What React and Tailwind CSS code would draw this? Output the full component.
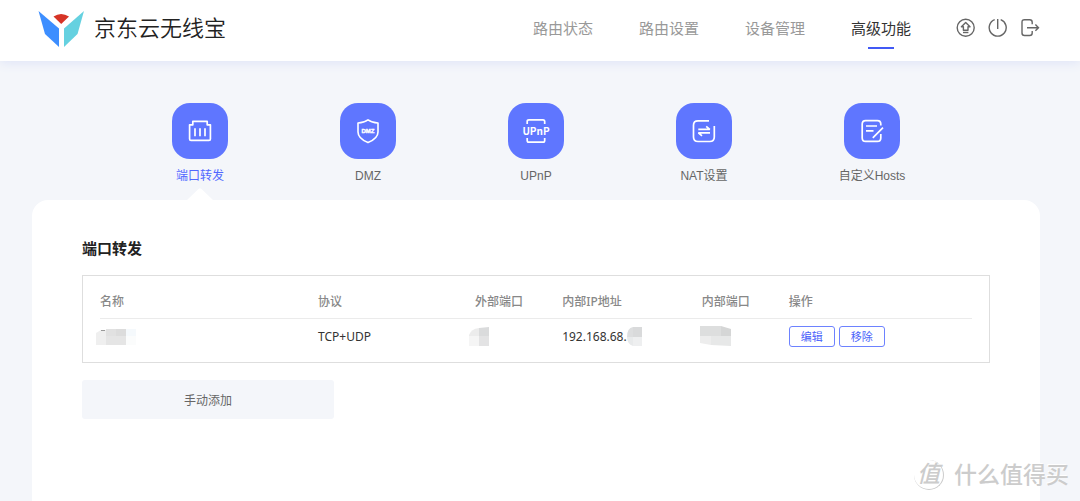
const navItems = ['路由状态', '路由设置', '设备管理', '高级功能'];

const columns = [
  { label: '名称', width: 'w-[25%]' },
  { label: '协议', width: 'w-[18%]' },
  { label: '外部端口', width: 'w-[10%]' },
  { label: '内部IP地址', width: 'w-[16%]' },
  { label: '内部端口', width: 'w-[10%]' },
  { label: '操作', width: 'w-[21%]' },
];

function Logo() {
  return (
    <svg width="46" height="38" viewBox="0 0 46 38" aria-hidden="true">
      <path d="M0.5 1 L21 18.5 V37 L7 24 Z" fill="#3d8eff" />
      <path d="M46 1 L26 18.5 V37 L39.5 24 Z" fill="#65d1e0" />
      <path d="M15.5 6.5 Q23 1.5 31 6.5 L23.2 14 Z" fill="#d63426" />
    </svg>
  );
}

function UpgradeIcon() {
  return (
    <svg width="20" height="20" viewBox="0 0 20 20" fill="none" stroke="#666" strokeWidth="1.4">
      <circle cx="9.7" cy="9.7" r="8.5" />
      <path d="M9.7 4.5 L14 8.8 H12 V12.2 H7.4 V8.8 H5.4 Z" strokeLinejoin="round" />
      <path d="M7 14.5 H12.4" />
    </svg>
  );
}

function PowerIcon() {
  return (
    <svg width="20" height="20" viewBox="0 0 20 20" fill="none" stroke="#666" strokeWidth="1.4">
      <path d="M6.7 1.7 A8.5 8.5 0 1 0 12.7 1.7" />
      <path d="M9.7 1 V11" />
    </svg>
  );
}

function LogoutIcon() {
  return (
    <svg width="20" height="20" viewBox="0 0 20 20" fill="none" stroke="#666" strokeWidth="1.4">
      <path d="M12.2 6.2 V4.2 Q12.2 1.7 9.7 1.7 H4.5 Q2 1.7 2 4.2 V15 Q2 17.5 4.5 17.5 H9.7 Q12.2 17.5 12.2 15 V13" />
      <path d="M7 9.7 H18.2 M15.4 6.6 L18.5 9.7 L15.4 12.8" />
    </svg>
  );
}

function PortIcon() {
  return (
    <svg width="28" height="28" viewBox="0 0 28 28" fill="none" stroke="#fff" strokeWidth="1.7" strokeLinejoin="round">
      <path d="M3.6 7.8 H6.8 V4.4 H21.2 V7.8 H24.4 V22 Q24.4 23.4 23 23.4 H5 Q3.6 23.4 3.6 22 Z" />
      <path d="M9 11.2 V19.2 M14 11.2 V19.2 M19 11.2 V19.2" />
    </svg>
  );
}

function DmzIcon() {
  return (
    <svg width="28" height="28" viewBox="0 0 28 28" fill="none" stroke="#fff" strokeWidth="1.6" strokeLinejoin="round">
      <path d="M14 2.8 C17 5 20.5 5.8 24 6 V15 C24 20 19.5 23.3 14 25.6 C8.5 23.3 4 20 4 15 V6 C7.5 5.8 11 5 14 2.8 Z" />
      <text x="14" y="16" textAnchor="middle" fontSize="6" fontWeight="700" fill="#fff" strokeWidth="0.4" fontFamily="Liberation Sans, sans-serif">DMZ</text>
    </svg>
  );
}

function UpnpIcon() {
  return (
    <svg width="28" height="28" viewBox="0 0 28 28" fill="none" stroke="#fff" strokeWidth="1.7">
      <path d="M5.2 7 V4.5 Q5.2 2.8 6.9 2.8 H21 Q22.7 2.8 22.7 4.5 V7" />
      <path d="M5.2 21 V23.5 Q5.2 25.2 6.9 25.2 H21 Q22.7 25.2 22.7 23.5 V21" />
      <text x="14" y="18" textAnchor="middle" fontSize="10" fontWeight="700" fill="#fff" stroke="none" fontFamily="Noto Sans CJK SC, sans-serif">UPnP</text>
    </svg>
  );
}

function NatIcon() {
  return (
    <svg width="28" height="28" viewBox="0 0 28 28" fill="none" stroke="#fff" strokeWidth="1.7">
      <path d="M19 3.8 H8 Q3.5 3.8 3.5 8.3 V20 Q3.5 24.5 8 24.5 H19.8 Q24.3 24.5 24.3 20 V9" />
      <path d="M8.3 12.4 H19.8 L16.2 9.4 M20 15.8 H8.4 L12 18.8" strokeLinejoin="bevel" />
    </svg>
  );
}

function HostsIcon() {
  return (
    <svg width="28" height="28" viewBox="0 0 28 28" fill="none" stroke="#fff" strokeWidth="1.7">
      <path d="M22.8 8.5 V7 Q22.8 3.6 19.4 3.6 H7.6 Q4.2 3.6 4.2 7 V21 Q4.2 24.4 7.6 24.4 H19.4 Q22.8 24.4 22.8 21 V17" />
      <path d="M8 9 H19 M8 13.9 H15.5 M14.8 20.8 L25 10.6" />
    </svg>
  );
}

const features = [
  { label: '端口转发', Icon: PortIcon, active: true },
  { label: 'DMZ', Icon: DmzIcon },
  { label: 'UPnP', Icon: UpnpIcon },
  { label: 'NAT设置', Icon: NatIcon },
  { label: '自定义Hosts', Icon: HostsIcon },
];

// mosaic blocks that hide the private values
function NameMask() {
  return (
    <svg className="-ml-1 block" width="40" height="17" viewBox="0 0 40 17">
      <path d="M0 4 L5 1 H10 V16 H0 Z" fill="#efefef" />
      <path d="M5 1.5 H9" stroke="#999" />
      <path d="M10 0 H20 V7 H10 Z" fill="#e1e1e1" />
      <path d="M20 0 H30 V7 H20 Z" fill="#dcdcdc" />
      <path d="M10 7 H30 V16 H10 Z" fill="#e5e5e5" />
      <path d="M30 0 H40 V7 H30 Z" fill="#f5f9fc" />
      <path d="M30 7 H40 V16 H30 Z" fill="#fbfcfc" />
    </svg>
  );
}

function OuterPortMask() {
  return (
    <svg className="-ml-1.5 block" width="20" height="19" viewBox="0 0 20 19">
      <path d="M0 8 Q2 2 10 1 V9 H0 Z" fill="#ececec" />
      <path d="M10 1 L20 0 V9 H10 Z" fill="#dadbdc" />
      <path d="M0 9 H10 V19 H0 Z" fill="#f5f5f5" />
      <path d="M10 9 H20 V19 H10 Z" fill="#e3e3e4" />
    </svg>
  );
}

function IpMask() {
  return (
    <svg className="block" width="15" height="20" viewBox="0 0 15 20">
      <path d="M0 10 Q0 1 6 0 V10 Z" fill="#dddedf" />
      <path d="M6 0 H15 V10 H6 Z" fill="#d9dadb" />
      <path d="M0 10 H6 V19 Q0 17 0 10 Z" fill="#e8eaeb" />
      <path d="M6 10 H15 V19 H6 Z" fill="#eeeff0" />
    </svg>
  );
}

function InnerPortMask() {
  return (
    <svg className="-ml-0.5 block" width="32" height="21" viewBox="0 0 32 21">
      <path d="M0 0 H21 V10 H0 Z" fill="#dddede" />
      <path d="M21 0 L31 3 V10 H21 Z" fill="#d5d6d6" />
      <path d="M0 10 H11 V19 L0 17 Z" fill="#ededed" />
      <path d="M11 10 H31 V20 L11 19 Z" fill="#e7e8e8" />
    </svg>
  );
}

function Header() {
  return (
    <header className="relative flex h-[61px] items-center justify-between bg-white pr-10 pb-1 pl-[38px] shadow-[0_2px_10px_#dfe4f7]">
      <a href="#home" className="flex items-center gap-[10px] text-[22px] leading-8 text-[#222]">
        <Logo />
        <span className="font-[350]">京东云无线宝</span>
      </a>
      <div className="flex items-center gap-[45px]">
        <nav className="flex gap-[46px] text-[15px] leading-6">
          {navItems.map((item) => {
            const active = item === '高级功能';
            return (
              <a
                key={item}
                href="#nav"
                className={`flex flex-col items-center gap-[6px] pt-2 ${active ? 'text-[#333]' : 'text-[#999]'}`}
              >
                {item}
                <span className={`h-[2px] w-[26px] ${active ? 'bg-[#4159f5]' : ''}`} />
              </a>
            );
          })}
        </nav>
        <div className="flex gap-3 pb-0.5">
          <button aria-label="升级"><UpgradeIcon /></button>
          <button aria-label="重启"><PowerIcon /></button>
          <button aria-label="退出"><LogoutIcon /></button>
        </div>
      </div>
    </header>
  );
}

function FeatureTabs() {
  return (
    <nav className="grid grid-cols-5 px-[84px] pt-[42px]">
      {features.map(({ label, Icon, active }) => (
        <a key={label} href="#feature" className="flex flex-col items-center text-xs">
          <span className="flex size-14 items-center justify-center rounded-[18px] bg-[#5f76ff]">
            <Icon />
          </span>
          <span className={`mt-[9px] leading-4 ${active ? 'text-[#5168ff]' : 'text-[#666]'}`}>{label}</span>
          <svg className="mt-1" width="26" height="12" viewBox="0 0 26 12">
            {active && <path d="M0 12 L11.5 1 Q13 -0.5 14.5 1 L26 12 Z" fill="#fff" />}
          </svg>
        </a>
      ))}
    </nav>
  );
}

function RuleTable() {
  return (
    <div className="mt-[14px] border border-[#dedede] px-[17px] pt-[18px] pb-[15px] font-['Noto_Sans','Noto_Sans_CJK_SC',sans-serif]">
      <table className="w-full table-fixed text-left text-xs leading-4">
        <thead>
          <tr className="border-b border-[#ebebeb] text-[#888]">
            {columns.map((col) => (
              <th key={col.label} className={`${col.width} pb-2 font-medium`}>{col.label}</th>
            ))}
          </tr>
        </thead>
        <tbody>
          <tr className="text-[#333]">
            <td className="pt-[9px]"><NameMask /></td>
            <td className="pt-[7px]">TCP+UDP</td>
            <td className="pt-[7px]"><OuterPortMask /></td>
            <td className="pt-[7px]">
              <div className="flex items-center">192.168.68.<IpMask /></div>
            </td>
            <td className="pt-[7px]"><InnerPortMask /></td>
            <td className="pt-[7px]">
              <div className="flex gap-1 text-[11px] text-[#4a62fa]">
                <button className="h-[21px] w-[46px] rounded-[3px] border border-[#6d82ff]">编辑</button>
                <button className="h-[21px] w-[46px] rounded-[3px] border border-[#6d82ff]">移除</button>
              </div>
            </td>
          </tr>
        </tbody>
      </table>
    </div>
  );
}

function Watermark() {
  return (
    <div className="pointer-events-none absolute right-[11px] bottom-2 flex items-center gap-[10px] text-[#ccc] [text-shadow:-1px_-1px_0_#fff]">
      <span className="flex size-[30px] items-center justify-center rounded-full border-r border-b border-[#ccc] text-[23px] leading-none font-medium italic">值</span>
      <span className="text-[23px] leading-9 font-medium">什么值得买</span>
    </div>
  );
}

function App() {
  return (
    <div className="relative flex min-h-screen flex-col bg-[#f4f6fa] font-['Liberation_Sans','Noto_Sans_CJK_SC',sans-serif]">
      <Header />
      <main className="flex flex-1 flex-col pr-10 pl-8">
        <FeatureTabs />
        <section className="flex-1 rounded-t-[16px] bg-white px-[50px] pt-[37px]">
          <h1 className="text-[15px] leading-6 font-bold text-[#222]">端口转发</h1>
          <RuleTable />
          <button className="mt-[17px] h-[39px] w-[252px] rounded-[3px] bg-[#f4f6fa] pt-0.5 text-xs text-[#666]">
            手动添加
          </button>
        </section>
      </main>
      <Watermark />
    </div>
  );
}

export default App;
